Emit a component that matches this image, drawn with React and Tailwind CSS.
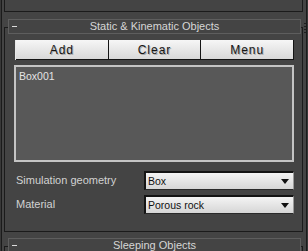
import React from 'react';

const font = { fontFamily: '"Liberation Sans", Arial, sans-serif' };

function RolloutHeader({ title }) {
  return (
    <div className="relative -mt-[9px] ml-[3px] mr-[1px] flex h-[15px] items-center justify-center border border-[#5e5e5e] bg-[#444444]">
      <span className="absolute left-[3px] top-[6px] h-px w-[5px] bg-[#dcdcdc]" />
      <span className="text-[11px] leading-none text-[#d6d6d6]">{title}</span>
    </div>
  );
}

function Button({ label }) {
  return (
    <div className="flex h-[20px] flex-1 items-center justify-center border-b border-r border-[#151515] bg-gradient-to-b from-[#f6f6f6] to-[#d9d9d9]">
      <span className="text-[12px] leading-none tracking-[1px] text-[#151515] [text-shadow:1px_1px_0_#a8a8a8]">{label}</span>
    </div>
  );
}

function Dropdown({ value }) {
  return (
    <div className="flex h-[19px] w-[150px] items-center justify-between border-l-2 border-t-2 border-b border-r border-l-[#141414] border-t-[#141414] border-b-[#2a2a2a] border-r-[#9a9a9a] bg-gradient-to-b from-[#f4f4f4] to-[#d6d6d6] pl-[2px] pr-[4px]">
      <span className="text-[10.5px] leading-none text-[#111]">{value}</span>
      <svg width="8" height="5" viewBox="0 0 8 5">
        <path d="M0 0h8L4 5z" fill="#111" />
      </svg>
    </div>
  );
}

export default function App() {
  return (
    <div className="flex h-[251px] w-[308px] overflow-hidden bg-[#444444]" style={font}>
      {/* left edge */}
      <div className="flex w-[4px] shrink-0">
        <div className="w-px bg-[#383838]" />
        <div className="w-px bg-[#1b1b1b]" />
      </div>

      {/* main column */}
      <div className="flex w-[299px] shrink-0 flex-col">
        <div className="h-[12px] shrink-0 border-x border-b border-[#1b1b1b]" />

        <div className="mt-[15px] flex h-[205px] shrink-0 flex-col border border-[#1b1b1b]">
          <RolloutHeader title="Static & Kinematic Objects" />

          <div className="ml-[10px] mt-[6px] flex w-[279px] border-l border-[#e8e8e8]">
            <Button label="Add" />
            <Button label="Clear" />
            <Button label="Menu" />
          </div>

          <div className="ml-[9px] mt-[5px] h-[97px] w-[280px] border-2 border-[#c4c4c4] bg-[#585858] pl-[3px] pt-[2px] text-[10.5px] leading-[14px] text-[#e4e4e4]">
            Box001
          </div>

          <div className="ml-[11px] mt-[9px] flex w-[278px] items-center justify-between">
            <span className="text-[11px] text-[#d2d2d2]">Simulation geometry</span>
            <Dropdown value="Box" />
          </div>
          <div className="ml-[11px] mt-[5px] flex w-[278px] items-center justify-between">
            <span className="text-[11px] text-[#d2d2d2]">Material</span>
            <Dropdown value="Porous rock" />
          </div>
        </div>

        <div className="mt-[14px] flex h-[20px] shrink-0 flex-col border-x border-t border-[#1b1b1b]">
          <RolloutHeader title="Sleeping Objects" />
        </div>
      </div>

      {/* right edge / scroll grip */}
      <div className="flex w-[5px] shrink-0">
        <div className="flex w-[3px] flex-col items-center pt-[23px]">
          <div className="flex flex-col gap-[2px]">
            <div className="h-px w-[2px] bg-[#1e1e1e]" />
            <div className="h-px w-[2px] bg-[#1e1e1e]" />
            <div className="h-px w-[2px] bg-[#1e1e1e]" />
            <div className="h-px w-[2px] bg-[#1e1e1e]" />
          </div>
        </div>
        <div className="w-px bg-[#1b1b1b]" />
        <div className="w-px bg-[#383838]" />
      </div>
    </div>
  );
}
